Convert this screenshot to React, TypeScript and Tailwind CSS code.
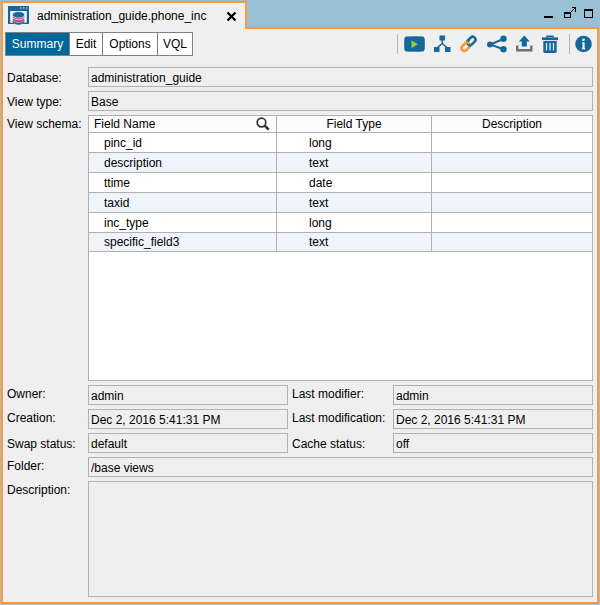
import type { ReactNode } from "react";

const BLUE = "#14689b";

const fields = [
  { name: "pinc_id", type: "long" },
  { name: "description", type: "text" },
  { name: "ttime", type: "date" },
  { name: "taxid", type: "text" },
  { name: "inc_type", type: "long" },
  { name: "specific_field3", type: "text" },
];

const tabs = ["Summary", "Edit", "Options", "VQL"];

function ViewIcon() {
  return (
    <svg width="21" height="20" viewBox="0 0 21 20" aria-hidden="true">
      <path d="M0 0H21V18H15V16.500H18.500V5H2.500V16.500H6V18H0Z" fill={BLUE} />
      <path d="M2.500 5H18.500V16.500H2.500Z" fill="#fff" />
      <path d="M12 2h1.500M15 2h1.500M18 2h1.500" stroke="#dbe9f1" strokeWidth="1.200" />
      <path d="M4.500 13.500V16.200Q10.500 21.500 16.500 16.200V13.500Z" fill={BLUE} />
      <path d="M4.500 9.500V14.200Q10.500 19 16.500 14.200V9.500Z" fill="#c8336a" stroke="#f3e3ea" strokeWidth="0.600" />
      <path d="M4.500 11.800Q10.500 16.200 16.500 11.800" fill="none" stroke="#f3e3ea" strokeWidth="0.900" />
      <ellipse cx="10.500" cy="8.800" rx="6.200" ry="3.300" fill={BLUE} stroke="#f3e3ea" strokeWidth="0.800" />
    </svg>
  );
}

function PlayIcon() {
  return (
    <svg width="21" height="18" viewBox="0 0 21 18" aria-hidden="true">
      <path d="M2 1.500Q10.500 1 19 1.500Q20.500 1.700 20.700 4Q21 9 20.700 14Q20.500 16.200 19 16.400Q10.500 17 2 16.400Q.5 16.200 .3 14Q0 9 .3 4Q.5 1.700 2 1.500Z" fill={BLUE} />
      <path d="M7.500 5.500v7.500L14 9.200Z" fill="#a3cf2c" />
    </svg>
  );
}

function TreeIcon() {
  return (
    <svg width="17" height="18" viewBox="0 0 17 18" aria-hidden="true">
      <g fill={BLUE}>
        <rect x="5.500" y="0.500" width="5.500" height="5" rx="0.500" />
        <rect x="0" y="12" width="5.500" height="5" rx="0.500" />
        <rect x="11" y="12" width="5.500" height="5" rx="0.500" />
      </g>
      <path d="M8.250 5v4M8.250 8.500L3.500 12.500M8.250 8.500L13 12.500" fill="none" stroke={BLUE} strokeWidth="1.500" />
    </svg>
  );
}

function LinkIcon() {
  return (
    <svg width="18" height="18" viewBox="0 0 18 18" fill="none" strokeWidth="2.500" aria-hidden="true">
      <rect x="-4.700" y="-2.800" width="9.400" height="5.600" rx="2.800" transform="translate(11.300 6) rotate(-45)" stroke={BLUE} />
      <rect x="-4.700" y="-2.800" width="9.400" height="5.600" rx="2.800" transform="translate(5.700 11.700) rotate(-45)" stroke="#f8962f" />
      <path d="M7.600 6.200L9.600 4.200M8.600 9.800Q9.800 10.800 11 10" stroke={BLUE} />
    </svg>
  );
}

function ShareIcon() {
  return (
    <svg width="20" height="18" viewBox="0 0 20 18" aria-hidden="true">
      <path d="M16.500 4L3 9.500L16.500 14.300" fill="none" stroke={BLUE} strokeWidth="2" />
      <g fill={BLUE}>
        <circle cx="16.500" cy="3.800" r="3.200" />
        <circle cx="2.900" cy="9.500" r="2.900" />
        <circle cx="16.500" cy="14.300" r="3.200" />
      </g>
    </svg>
  );
}

function ExportIcon() {
  return (
    <svg width="17" height="18" viewBox="0 0 17 18" aria-hidden="true">
      <path d="M1.200 10.500V15.200H15.300V10.500" fill="none" stroke="#6e7276" strokeWidth="2.400" />
      <path d="M8.300 0.600L13.800 6.500H10.800V11.500H5.800V6.500H2.800Z" fill={BLUE} />
    </svg>
  );
}

function TrashIcon() {
  return (
    <svg width="16" height="19" viewBox="0 0 16 19" aria-hidden="true">
      <path d="M5 2.500V1.200H11V2.500" fill="none" stroke={BLUE} strokeWidth="1.400" />
      <rect x="0" y="2.400" width="16" height="2.700" fill={BLUE} />
      <path d="M1.300 6H14.700V16.500Q14.700 18 13.200 18H2.800Q1.300 18 1.300 16.500Z" fill={BLUE} />
      <path d="M4.500 8V15.500M8 8V15.500M11.500 8V15.500" stroke="#dce8ef" strokeWidth="1.300" />
    </svg>
  );
}

function InfoIcon() {
  return (
    <svg width="17" height="18" viewBox="0 0 17 18" aria-hidden="true">
      <circle cx="8.500" cy="9" r="8.300" fill={BLUE} />
      <circle cx="8.500" cy="4.800" r="1.300" fill="#fff" />
      <path d="M7 7.200H9.600V13H10.200V14.200H6.900V13H7.500V8.300H7Z" fill="#fff" />
    </svg>
  );
}

function IconButton({ label, children }: { label: string; children: ReactNode }) {
  return (
    <button type="button" aria-label={label} className="flex shrink-0 items-center justify-center">
      {children}
    </button>
  );
}

function Label({ id, top, children }: { id: string; top?: boolean; children: ReactNode }) {
  return (
    <label htmlFor={id} className={top ? "self-start whitespace-nowrap leading-[18px]" : "whitespace-nowrap leading-[22px]"}>
      {children}
    </label>
  );
}

function Field({ id, value, wide }: { id: string; value: string; wide?: boolean }) {
  return (
    <input
      id={id}
      readOnly
      value={value}
      className={
        wide
          ? "col-span-3 h-5 w-full min-w-0 border border-[#b0b0b0] bg-[#efefef] px-0.5 pt-0.5 leading-4 outline-none"
          : "h-5 w-full min-w-0 border border-[#b0b0b0] bg-[#efefef] px-0.5 pt-0.5 leading-4 outline-none"
      }
    />
  );
}

export default function App() {
  return (
    <div className="flex min-h-screen flex-col bg-[#99c0d4] p-px font-['Liberation_Sans',Arial,sans-serif] text-[12px] text-black">
      <header className="flex h-[26px] items-start justify-between">
        <div className="z-10 flex h-7 w-[246px] items-center border-2 border-b-0 border-[#ff9933] bg-[#efefef] pl-[5px] pr-2">
          <ViewIcon />
          <span className="ml-2 grow">administration_guide.phone_inc</span>
          <button type="button" aria-label="Close tab">
            <svg width="11" height="11" viewBox="0 0 11 11" aria-hidden="true">
              <path d="M1.500 1.500L9.500 9.500M9.500 1.500L1.500 9.500" stroke="#000" strokeWidth="2.200" />
            </svg>
          </button>
        </div>
        <div className="flex gap-2 pr-1.5 pt-1.5">
          <button type="button" aria-label="Minimize">
            <svg width="12" height="12" viewBox="0 0 12 12" shapeRendering="crispEdges" aria-hidden="true">
              <rect x="1" y="9" width="9" height="2" />
            </svg>
          </button>
          <button type="button" aria-label="Detach">
            <svg width="13" height="12" viewBox="0 0 13 12" fill="none" stroke="#000" shapeRendering="crispEdges" aria-hidden="true">
              <path d="M1 6H8" strokeWidth="2" />
              <path d="M1.500 5V10.500H7.500V5" />
              <path d="M8.500 0.500H12.500V4.500M11.500 1V2M10.500 2V3M9.500 3V4M8.500 4V5" />
            </svg>
          </button>
          <button type="button" aria-label="Maximize">
            <svg width="9" height="12" viewBox="0 0 9 12" fill="none" stroke="#000" shapeRendering="crispEdges" aria-hidden="true">
              <path d="M0 3H9" strokeWidth="2" />
              <path d="M0.500 2V10.500H8.500V2" />
            </svg>
          </button>
        </div>
      </header>

      <main className="flex grow flex-col border-2 border-[#ff9933] bg-[#efefef]">
        <div className="flex items-center justify-between pl-0.5 pr-[5px] pt-[3px]">
          <nav className="grid h-6 grid-cols-[64px_33px_55px_34px] divide-x divide-[#808080] border border-[#808080] bg-white">
            {tabs.map((tab, i) => (
              <button
                key={tab}
                type="button"
                aria-pressed={i === 0}
                className={i === 0 ? "bg-[#006699] text-white" : "text-black"}
              >
                {tab}
              </button>
            ))}
          </nav>
          <div className="flex items-center">
            <div className="flex h-5 items-center gap-[9px] border-l border-[#b4b4b4] pl-1.5 pr-[11px]">
              <IconButton label="Execute"><PlayIcon /></IconButton>
              <IconButton label="Tree view"><TreeIcon /></IconButton>
              <IconButton label="Connections"><LinkIcon /></IconButton>
              <IconButton label="Used by"><ShareIcon /></IconButton>
              <IconButton label="Export"><ExportIcon /></IconButton>
              <IconButton label="Delete"><TrashIcon /></IconButton>
            </div>
            <div className="flex h-5 items-center border-l border-[#b4b4b4] pl-[5px]">
              <IconButton label="Information"><InfoIcon /></IconButton>
            </div>
          </div>
        </div>

        <form className="mt-[11px] grid grow grid-cols-[81px_minmax(0,1fr)_105px_minmax(0,1fr)] grid-rows-[20px_20px_266px_20px_20px_20px_20px_minmax(60px,1fr)] gap-y-1 px-1 pb-[5px]">
          <Label id="database">Database:</Label>
          <Field id="database" value="administration_guide" wide />
          <Label id="viewType">View type:</Label>
          <Field id="viewType" value="Base" wide />

          <span id="schemaLabel" className="self-start whitespace-nowrap leading-[18px]">View schema:</span>
          <div className="col-span-3 border border-[#b0b0b0] bg-white">
            <table aria-labelledby="schemaLabel" className="w-full table-fixed border-separate border-spacing-0">
              <colgroup>
                <col className="w-[188px]" />
                <col className="w-[155px]" />
                <col />
              </colgroup>
              <thead className="bg-[#fcfcfc]">
                <tr>
                  <th scope="col" className="border-b border-r border-[#b0b0b0] p-0 pl-[5px] pr-1.5 font-normal">
                    <div className="flex h-4 items-center justify-between">
                      Field Name
                      <button type="button" aria-label="Search fields">
                        <svg width="14" height="14" viewBox="0 0 14 14" fill="none" stroke="#333" aria-hidden="true">
                          <circle cx="5.500" cy="5.500" r="4.300" strokeWidth="1.700" />
                          <path d="M8.700 8.700L12.700 12.700" strokeWidth="2.600" />
                        </svg>
                      </button>
                    </div>
                  </th>
                  <th scope="col" className="border-b border-r border-[#b0b0b0] p-0 text-center font-normal leading-4">Field Type</th>
                  <th scope="col" className="border-b border-[#b0b0b0] p-0 text-center font-normal leading-4">Description</th>
                </tr>
              </thead>
              <tbody>
                {fields.map((f) => (
                  <tr key={f.name} className="h-5 last:h-[19px] even:bg-[#eef4f9]">
                    <td className="border-b border-r border-[#b0b0b0] p-0 pl-[15px] leading-4">{f.name}</td>
                    <td className="border-b border-r border-[#b0b0b0] p-0 pl-8 leading-4">{f.type}</td>
                    <td className="border-b border-[#b0b0b0] p-0" />
                  </tr>
                ))}
              </tbody>
            </table>
          </div>

          <Label id="owner" top>Owner:</Label>
          <Field id="owner" value="admin" />
          <div className="pl-1"><Label id="modifier" top>Last modifier:</Label></div>
          <Field id="modifier" value="admin" />

          <Label id="creation" top>Creation:</Label>
          <Field id="creation" value="Dec 2, 2016 5:41:31 PM" />
          <div className="pl-1"><Label id="modification" top>Last modification:</Label></div>
          <Field id="modification" value="Dec 2, 2016 5:41:31 PM" />

          <Label id="swap">Swap status:</Label>
          <Field id="swap" value="default" />
          <div className="pl-1"><Label id="cache">Cache status:</Label></div>
          <Field id="cache" value="off" />

          <Label id="folder" top>Folder:</Label>
          <Field id="folder" value="/base views" wide />

          <Label id="description" top>Description:</Label>
          <textarea
            id="description"
            readOnly
            className="col-span-3 h-full w-full resize-none border border-[#b0b0b0] bg-[#efefef] px-0.5 pt-0.5 outline-none"
          />
        </form>
      </main>
    </div>
  );
}
